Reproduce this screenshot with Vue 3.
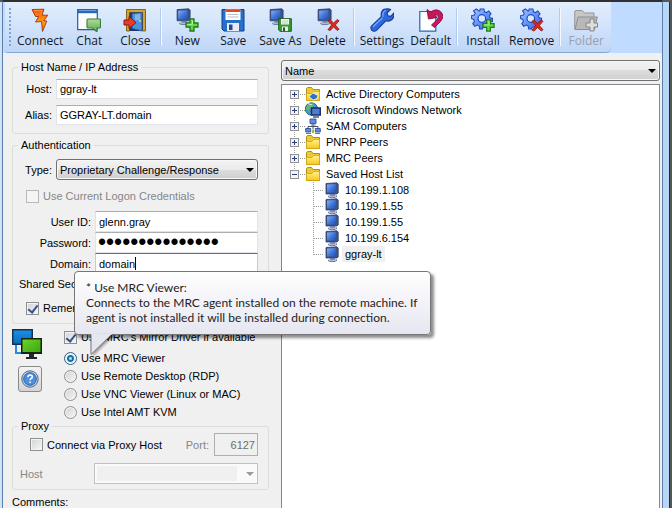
<script setup>
import { ref } from 'vue'

const tools = [
  { icon: 'bolt', label: 'Connect' },
  { icon: 'chat', label: 'Chat' },
  { icon: 'door', label: 'Close' },
  { sep: true },
  { icon: 'pc-add', label: 'New' },
  { icon: 'floppy', label: 'Save' },
  { icon: 'pc-save', label: 'Save As' },
  { icon: 'pc-del', label: 'Delete' },
  { sep: true },
  { icon: 'wrench', label: 'Settings' },
  { icon: 'revert', label: 'Default' },
  { sep: true },
  { icon: 'gear-add', label: 'Install' },
  { icon: 'gear-del', label: 'Remove' },
  { sep: true },
  { icon: 'folder-add', label: 'Folder', disabled: true },
]

const tree = [
  { icon: 'folder-ad', label: 'Active Directory Computers' },
  { icon: 'globe', label: 'Microsoft Windows Network' },
  { icon: 'network', label: 'SAM Computers' },
  { icon: 'folder', label: 'PNRP Peers' },
  { icon: 'folder', label: 'MRC Peers' },
  { icon: 'folder', label: 'Saved Host List', open: true },
]
const hosts = ['10.199.1.108', '10.199.1.55', '10.199.1.55', '10.199.6.154', 'ggray-lt']

const viewers = [
  { id: 'mrc', label: 'Use MRC Viewer' },
  { id: 'rdp', label: 'Use Remote Desktop (RDP)' },
  { id: 'vnc', label: 'Use VNC Viewer (Linux or MAC)' },
  { id: 'kvm', label: 'Use Intel AMT KVM' },
]

const host = ref('ggray-lt')
const alias = ref('GGRAY-LT.domain')
const user = ref('glenn.gray')
const password = ref('secretpassword1')
const domain = ref('domain')
const remember = ref(true)
const mirror = ref(true)
const viewer = ref('mrc')
const viaProxy = ref(false)
const port = ref('6127')
</script>

<template>
  <div class="window">
    <svg class="defs" aria-hidden="true">
      <defs>
        <linearGradient id="g-bolt" x1="0" y1="0" x2="0" y2="1"><stop offset="0" stop-color="#ff5a0a" /><stop offset=".6" stop-color="#ff9c10" /><stop offset="1" stop-color="#d86808" /></linearGradient>
        <linearGradient id="g-screen" x1="0" y1="0" x2="1" y2="1"><stop offset="0" stop-color="#8fb4f4" /><stop offset=".5" stop-color="#4478dc" /><stop offset="1" stop-color="#2350b4" /></linearGradient>
        <linearGradient id="g-chat" x1="0" y1="0" x2="0" y2="1"><stop offset="0" stop-color="#b4dc98" /><stop offset="1" stop-color="#56a850" /></linearGradient>
        <linearGradient id="g-gear" x1="0" y1="0" x2="1" y2="1"><stop offset="0" stop-color="#a4c6ff" /><stop offset="1" stop-color="#2c62e4" /></linearGradient>
        <linearGradient id="g-folder" x1="0" y1="0" x2="0" y2="1"><stop offset="0" stop-color="#fff08c" /><stop offset="1" stop-color="#f8c81c" /></linearGradient>
        <linearGradient id="g-blue" x1="0" y1="0" x2="0" y2="1"><stop offset="0" stop-color="#1a8ee0" /><stop offset="1" stop-color="#0c6cc0" /></linearGradient>
        <linearGradient id="g-green" x1="0" y1="0" x2="1" y2="1"><stop offset="0" stop-color="#6cd428" /><stop offset="1" stop-color="#38a810" /></linearGradient>
      </defs>
      <symbol id="pc" viewBox="0 0 16 16">
        <path d="M2 1.500 13 .8 14.200 2v9L12.800 12H2z" fill="#3c5488" stroke="#2c4068" stroke-width=".8" />
        <path d="M3 2.600 11.600 2v8.400L3 10.600z" fill="url(#g-screen)" />
        <path d="M6 12h5v1.600h2V15l-2.500 1H6l-2-1v-1.200h2z" fill="#6e7ea6" />
        <path d="M5 14.300h7" stroke="#c4cce0" />
      </symbol>
      <symbol id="plus" viewBox="0 0 14 14">
        <path d="M5 1h4v4h4v4H9v4H5V9H1V5h4z" fill="#5fd842" stroke="#1d7a1c" stroke-width="1.300" />
        <path d="M6 2.300h1.500v4H2.300" fill="none" stroke="#b8f49c" />
      </symbol>
      <symbol id="cross" viewBox="0 0 14 14">
        <path d="M1 2.500 3.500 1 7 5l4-4 2 1.500L9 7l4 4.500L11 13 7 9l-3.500 4L1 12l4-5z" fill="#d92a1c" stroke="#8c1210" stroke-width=".8" />
      </symbol>
      <symbol id="gear" viewBox="0 0 22 22">
        <path d="M9 1h4l.5 3 2 .8L18 3l2.500 3-1.700 2.300.7 2 2.500.5v3.500l-3 .6-1 2L19.500 19 17 21l-2.700-1.500-2 .8-.8 1.700H8.500L8 19l-2-1-2.600 1.400L1.200 16.500 3 14l-.7-2L0 11.300V8l3-.6.800-2L2 3l3-2 2.300 1.800L8.600 3z" transform="translate(.6 0) scale(.95)" fill="url(#g-gear)" stroke="#1c48c0" stroke-width="1.100" />
        <circle cx="10.800" cy="10.500" r="3.800" fill="#d8e8ff" stroke="#1c48c0" stroke-width="1.200" />
      </symbol>
      <symbol id="bolt" viewBox="0 0 24 24">
        <path d="M4 1.500 16 1.200l-2 6h5.800l-4 5.500 3 .300L14.500 23.500l-1-10-6 .500 3.200-5.500H7.500z" fill="url(#g-bolt)" stroke="#a8340a" stroke-width=".9" stroke-linejoin="round" />
        <path d="M6 2.500h8L12.500 7.500" fill="none" stroke="#ff9a50" stroke-width=".8" />
      </symbol>
      <symbol id="chat" viewBox="0 0 24 24">
        <path d="M.7 1.700h19.600v20H.7z" fill="#fafcff" stroke="#2c5aa0" stroke-width="1.200" />
        <path d="M.7 1.200h19.600v4H.7z" fill="#2c66b8" />
        <path d="M2 2.500h17" stroke="#6c9cdc" />
        <path d="M11 11h11.500q1 0 1 1v7q0 1-1 1H20v4L15.500 20H11q-1 0-1-1v-7q0-1 1-1z" fill="url(#g-chat)" stroke="#35803a" stroke-width="1.100" />
      </symbol>
      <symbol id="door" viewBox="0 0 24 24">
        <path d="M3.500 23V1.500h19V23h-3V4.500h-13V23z" fill="#d4a432" stroke="#7c5a10" stroke-width=".9" />
        <path d="M6.500 4.500h13V23h-13z" fill="#1e3868" />
        <path d="M9 5.500l10-1V23L9 20.500z" fill="#4c92dc" stroke="#1c4a94" stroke-width=".7" />
        <path d="M12 6.500l5-.500v6l-5 .500z" fill="#7eb6ee" />
        <circle cx="17" cy="13" r="1.100" fill="#f2d860" />
        <path d="M1 12h5V8.500l7 6-7 6V17H1z" fill="#e83c24" stroke="#8e1410" stroke-width="1" />
      </symbol>
      <symbol id="pc-add" viewBox="0 0 24 24">
        <use href="#pc" width="17" height="17" /><use href="#plus" x="10" y="10" width="14" height="14" />
      </symbol>
      <symbol id="pc-save" viewBox="0 0 24 24">
        <use href="#pc" width="17" height="17" />
        <path d="M10.700 10.700h12.600v12.600H12l-1.300-1.300z" fill="#3c9a34" stroke="#1c5c1c" />
        <path d="M13 11h8v5.500h-8z" fill="#f4f8f4" /><path d="M14 13h6M14 15h6" stroke="#9cb89c" stroke-width=".7" />
        <path d="M14 18.500h6V23h-6z" fill="#e4ece4" /><path d="M15 19.500h2V23h-2z" fill="#1c5c1c" />
      </symbol>
      <symbol id="pc-del" viewBox="0 0 24 24">
        <use href="#pc" width="17" height="17" /><use href="#cross" x="11" y="10" width="13" height="14" />
      </symbol>
      <symbol id="floppy" viewBox="0 0 24 24">
        <path d="M1 1.500h22v21.500H3l-2-2z" fill="#2470cc" stroke="#123e88" />
        <path d="M4.500 1.500h15V12h-15z" fill="#fff" /><path d="M4.500 1.500h15V4h-15z" fill="#e84428" />
        <path d="M6.500 6.500h11M6.500 9h11" stroke="#b4bcc8" />
        <path d="M6 15h12v8H6z" fill="#e8ecf2" /><path d="M8 16.500h3.500V22H8z" fill="#1c4c98" />
      </symbol>
      <symbol id="wrench" viewBox="0 0 24 24">
        <path d="M14 1.300Q18 0 20.500 1.500L17 5l.8 2.700 2.900.6L23.800 5q.7 4-1.800 6.500-2.500 2.300-6.200 1.300L6.500 22.300Q4.500 24 2 22.600 0 20 1.500 18L11.300 8.700Q10.500 3.500 14 1.300z" fill="#2d68dc" stroke="#143c9c" stroke-width="1.100" />
        <path d="M13 8.800Q12 4.500 15.500 2.500M3 18.700l9.500-9" fill="none" stroke="#7aa8fa" stroke-width="1.300" />
      </symbol>
      <symbol id="revert" viewBox="0 0 24 24">
        <path d="M.8 3.500h16v19.700H.8z" fill="#fff" stroke="#2a62c0" stroke-width="1.200" />
        <path d="M8 1.500l1.500 9.500 8.500-1.500-2.700-2.200q2.200-1.500 3.500.2 1.200 2-.8 4.300L12.500 17l3 2.500 6-6q4-5 1-9Q18-.5 11.500 4z" fill="#c8185c" stroke="#8a0c3c" stroke-width=".9" />
      </symbol>
      <symbol id="gear-add" viewBox="0 0 24 24"><use href="#gear" width="22" height="22" /><use href="#plus" x="11" y="11" width="13" height="13" /></symbol>
      <symbol id="gear-del" viewBox="0 0 24 24"><use href="#gear" width="22" height="22" /><use href="#cross" x="11" y="11" width="13" height="13" /></symbol>
      <symbol id="folder-add" viewBox="0 0 24 24">
        <path d="M.7 21V4q0-1.500 1.500-1.500h6L10.500 5H20v4" fill="#c6c6c6" stroke="#969696" />
        <path d="M1 21.500 4 9h19.300L20.500 21.500z" fill="#b8b8b8" stroke="#8e8e8e" />
        <path d="M16 11h4v4h3.500v4H20v4h-4v-4h-4v-4h4z" fill="#ddd" stroke="#858585" />
      </symbol>
      <symbol id="folder" viewBox="0 0 16 16">
        <path d="M1.500 14.500v-12L2.500 1.500h4l1.500 2h6.500v11z" fill="#f0c830" stroke="#b48c14" />
        <path d="M1.500 14.500v-7h5.500l1.500-2h6v9z" fill="url(#g-folder)" stroke="#d0a418" stroke-width=".8" />
      </symbol>
      <symbol id="folder-ad" viewBox="0 0 16 16">
        <use href="#folder" width="16" height="16" />
        <path d="M4 10.500 8 7l5 2.500-1 3-4 1.500z" fill="#2d72c4" stroke="#fff" stroke-width=".7" />
      </symbol>
      <symbol id="globe" viewBox="0 0 16 16">
        <circle cx="6.500" cy="7" r="6.200" fill="#4a96c8" stroke="#2a6a78" />
        <path d="M2 3.500Q5 .5 9 1.500L8 4.500 5 6 3.500 9 1 7z" fill="#66b86c" /><path d="M3 1.500l4 1.500" stroke="#d8f0e4" />
        <path d="M6.500 6h8.800v7H6.500z" fill="#4a7cd8" stroke="#1c2e5c" stroke-width="1.400" />
        <path d="M8 15h6" stroke="#4c5c80" stroke-width="1.500" />
      </symbol>
      <symbol id="network" viewBox="0 0 16 16">
        <path d="M8 6v5M3 11V8.500h10V11" fill="none" stroke="#46546e" />
        <path d="M5 1h6v4.500H5z" fill="#5d8ce4" stroke="#34508c" stroke-width=".9" /><path d="M.7 10.500h5v3.500h-5zM10.300 10.500h5v3.500h-5z" fill="#5d8ce4" stroke="#34508c" stroke-width=".9" />
        <path d="M1 15.500h5M10 15.500h5M6 7h4.500" stroke="#6a7690" />
        <path d="M7 11.500h2V15H7z" fill="#9cba4c" />
      </symbol>
    </svg>

    <nav class="toolbar" aria-label="Main">
      <div class="strip">
        <span class="grip"></span>
        <template v-for="(t, i) in tools" :key="i">
          <span v-if="t.sep" class="sep"></span>
          <button v-else type="button" class="tool" :disabled="t.disabled">
            <svg class="tool-icon"><use :href="'#' + t.icon" /></svg>
            <span>{{ t.label }}</span>
          </button>
        </template>
      </div>
    </nav>

    <main class="body">
      <form class="form" @submit.prevent>
        <fieldset class="group names">
          <legend>Host Name / IP Address</legend>
          <label for="host">Host:</label>
          <input id="host" v-model="host" class="text" type="text" />
          <label for="alias">Alias:</label>
          <input id="alias" v-model="alias" class="text" type="text" />
        </fieldset>

        <fieldset class="group auth">
          <legend>Authentication</legend>
          <div class="type-row">
            <label for="type">Type:</label>
            <div class="combo">
              <select id="type"><option>Proprietary Challenge/Response</option></select>
            </div>
          </div>
          <label class="check indent current off"><input type="checkbox" disabled /> Use Current Logon Credentials</label>
          <div class="creds">
            <label for="user">User ID:</label>
            <input id="user" v-model="user" class="text" type="text" />
            <label for="pass">Password:</label>
            <input id="pass" v-model="password" class="text secret" type="password" />
            <label for="domain">Domain:</label>
            <div class="text focused">
              <input id="domain" v-model="domain" class="bare" type="text" /><span class="caret"></span>
            </div>
          </div>
          <div class="secret-label">Shared Secret:</div>
          <label class="check indent remember"><input v-model="remember" type="checkbox" /> Remember</label>
        </fieldset>

        <div class="options">
          <div class="side">
            <svg class="screens" viewBox="0 0 30 30">
              <path d="M4 16v8h8" fill="none" stroke="#2a8cdc" stroke-width="2" />
              <path d="M0 0h21v16H0z" fill="#16324c" /><path d="M1.500 1.500h18v13h-18z" fill="url(#g-blue)" />
              <path d="M9 9h21v16H9z" fill="#16240e" /><path d="M10.500 10.500h18v12.500h-18z" fill="url(#g-green)" />
              <path d="M17 25h5v3h3v2H14v-2h3z" fill="#20262c" />
            </svg>
            <button type="button" class="help" aria-label="Help">
              <svg viewBox="0 0 18 18">
                <circle cx="9" cy="9" r="8.200" fill="#c8d4e4" stroke="#58687e" /><circle cx="9" cy="9" r="6.300" fill="#4c8ee0" stroke="#2a62b4" />
                <path d="M6.800 7.300Q7 5 9.100 5q2.200 0 2.200 1.900 0 1.100-1.300 1.800-.9.500-.9 1.500M9.100 11.500v1.500" fill="none" stroke="#fff" stroke-width="1.500" />
              </svg>
            </button>
          </div>
          <div class="choices">
            <label class="check mirror"><input v-model="mirror" type="checkbox" /> Use MRC's Mirror Driver if available</label>
            <label v-for="v in viewers" :key="v.id" class="check choice">
              <input v-model="viewer" type="radio" name="viewer" :value="v.id" /> {{ v.label }}
            </label>
          </div>
        </div>

        <fieldset class="group proxy">
          <legend>Proxy</legend>
          <div class="proxy-row">
            <label class="check"><input v-model="viaProxy" type="checkbox" /> Connect via Proxy Host</label>
            <label class="off port-label" for="port">Port:</label>
            <input id="port" v-model="port" class="port" type="text" disabled />
          </div>
          <div class="proxy-row host-row">
            <label class="off" for="proxy-host">Host</label>
            <div class="combo disabled"><select id="proxy-host" disabled></select></div>
          </div>
        </fieldset>
        <div class="comments">Comments:</div>
      </form>

      <section class="browser">
        <div class="combo wide">
          <select aria-label="Sort by"><option>Name</option></select>
        </div>
        <div class="list">
          <ul class="tree">
            <li v-for="n in tree" :key="n.label">
              <div class="node">
                <span class="toggle" :class="{ open: n.open }"></span>
                <svg class="node-icon"><use :href="'#' + n.icon" /></svg>
                <span class="name">{{ n.label }}</span>
              </div>
              <ul v-if="n.open" class="children">
                <li v-for="(h, i) in hosts" :key="i" class="leaf">
                  <svg class="node-icon"><use href="#pc" /></svg>
                  <span class="name" :class="{ selected: h === 'ggray-lt' }">{{ h }}</span>
                </li>
              </ul>
            </li>
          </ul>
        </div>
      </section>
    </main>

    <div class="tooltip" role="tooltip">
      <p>* Use MRC Viewer:</p>
      <p>Connects to the MRC agent installed on the remote machine. If</p>
      <p>agent is not installed it will be installed during connection.</p>
      <svg class="tail" viewBox="0 0 24 22"><path d="M1 0v20.500L22 0" fill="#e6e6f1" stroke="#767676" /><path d="M1.500 0h20" stroke="#e6e6f1" stroke-width="2" /></svg>
    </div>
  </div>
</template>

<style>
body { margin: 0; overflow: hidden; background: #2f2f2f; }
</style>

<style scoped>
* { box-sizing: border-box; }
.window {
  position: relative;
  display: flex;
  flex-direction: column;
  height: 100vh;
  overflow: hidden;
  padding: 0 3px 0 0;
  background: #565656;
  color: #000;
  font: 11px/14px "Liberation Sans", Arial, sans-serif;
}
.defs { position: absolute; width: 0; height: 0; }
.toolbar {
  flex: none;
  height: 55px;
  padding-bottom: 2px;
  border: solid #5c7ea8;
  border-width: 0 1px 0 1px;
  border-top: 2px solid #303030;
  margin: 0 6px 0 2px;
  background: linear-gradient(#bfdbff 0 51px, #e9f1fb 51px);
}
.window::before {
  content: "";
  position: absolute;
  inset: 2px 3px 0 0;
  background: linear-gradient(90deg, #cfe3f7, #b7d7f7);
  box-shadow: 1px 0 #222c38;
}
.toolbar, .body { position: relative; }
.strip {
  display: flex;
  align-items: center;
  gap: 2px;
  width: fit-content;
  height: 51px;
  margin-left: 2px;
  padding: 0 3px 0 4px;
  border-bottom: 1px solid #86a5d4;
  border-radius: 0 0 5px 3px;
  background: linear-gradient(#e2edfc, #d3e4fb 45%, #bed6f6);
}
.grip {
  width: 2px;
  height: 38px;
  margin-right: 2px;
  background: repeating-linear-gradient(#83a3cf 0 2px, transparent 2px 4px);
}
.sep { width: 2px; height: 38px; margin: 0 1px; background: linear-gradient(90deg, #b2cbee 50%, #f4f9ff 50%); }
.tool {
  display: flex;
  flex-direction: column;
  align-items: center;
  gap: 1px;
  min-width: 44px;
  padding: 3px 2px 0;
  border: 0;
  background: none;
  color: #101828;
  font: 12px/16px "Open Sans", "Segoe UI", sans-serif;
  white-space: nowrap;
}
.tool:disabled { color: #98a0ac; }
.tool-icon { width: 24px; height: 24px; }

.body {
  flex: 1;
  display: flex;
  gap: 12px;
  min-height: 0;
  margin: 0 6px 0 2px;
  padding: 5px 2px 0 9px;
  border: solid #5c7ea8;
  border-width: 0 1px;
  background: #f0f0f0;
}
.form { flex: none; width: 257px; }
.group { min-width: 0; margin: 0; padding: 0 10px; border: 1px solid #dcdcdc; border-radius: 3px; }
legend { margin-left: -5px; padding: 0 3px; line-height: 14px; }
label { white-space: nowrap; }
.names {
  display: grid;
  grid-template-columns: 29px 1fr;
  gap: 6px 4px;
  align-items: center;
  height: 74px;
  padding-top: 5px;
  align-content: start;
}
.names label, .creds label, .type-row label { text-align: right; }
input, select, button { margin: 0; font: inherit; color: inherit; }
.text {
  width: 100%;
  min-width: 0;
  height: 20px;
  padding: 0 3px;
  border: 1px solid #e2e3ea;
  border-top-color: #abadb3;
  border-radius: 0;
  background: #fff;
  outline: 0;
}
.auth { height: 186px; margin-top: 4px; }
.type-row { display: grid; grid-template-columns: 29px 1fr; gap: 4px; align-items: center; padding-top: 7px; }
.combo { position: relative; min-width: 0; }
.combo select {
  display: block;
  width: 100%;
  height: 21px;
  padding: 0 18px 0 3px;
  appearance: none;
  border: 1px solid #707070;
  border-radius: 3px;
  background: linear-gradient(#f2f2f2, #ebebeb 50%, #dddddd 50%, #cfcfcf);
  box-shadow: inset 0 0 0 1px #f8f8f8;
}
.combo::after {
  content: "";
  position: absolute;
  right: 4px;
  top: 9px;
  border: 4px solid transparent;
  border-top-color: #000;
  border-bottom: 0;
}
.check { display: flex; align-items: center; gap: 4px; height: 18px; }
.indent { margin-left: 3px; }
.off { color: #868686; }
.current { margin-top: 7px; }
.check input {
  flex: none;
  width: 13px;
  height: 13px;
  appearance: none;
  border: 1px solid #8e8f8f;
  background: linear-gradient(135deg, #cfd3d8, #f6f6f6);
  box-shadow: inset 0 0 0 1px #f4f4f4;
}
.check input:disabled { border-color: #b8b8b8; background: #f4f4f4; }
.check input[type="checkbox"]:checked { position: relative; }
.check input[type="checkbox"]:checked::after {
  content: "";
  position: absolute;
  left: 3px;
  top: 0;
  width: 4px;
  height: 8px;
  border: solid #3a4f8c;
  border-width: 0 2px 2px 0;
  transform: rotate(38deg);
}
.check input[type="radio"] { border-radius: 50%; }
.check input[type="radio"]:checked {
  border-color: #2f5f86;
  background: radial-gradient(circle, #8fe0fa 0 1px, #1a6f9e 2px 3px, #e4f2fa 4px);
}
.creds { display: grid; grid-template-columns: 68px 1fr; column-gap: 4px; align-items: center; margin-top: 6px; }
.creds .text { height: 21px; }
.creds .secret { padding: 0 2px; font: 23px/18px "Liberation Sans", sans-serif; }
.focused { display: flex; align-items: center; border-color: #b5cfe7; border-top-color: #3d7bad; }
.bare { field-sizing: content; padding: 0; border: 0; outline: 0; background: none; }
.caret { width: 1px; height: 13px; background: #000; }
.secret-label { margin: 3px 0 0 -4px; }
.remember { margin-top: 8px; }

.options { display: flex; gap: 22px; height: 95px; padding-top: 5px; }
.side { display: flex; flex-direction: column; align-items: center; gap: 7px; }
.screens { width: 30px; height: 30px; }
.help {
  display: grid;
  place-items: center;
  width: 24px;
  height: 26px;
  padding: 0;
  margin-left: 6px;
  border: 1px solid #8a8a8a;
  border-radius: 3px;
  background: linear-gradient(#f3f3f3, #d4d4d4);
}
.help svg { width: 18px; height: 18px; }
.mirror { height: 16px; margin-bottom: 4px; }

.proxy { height: 71px; }
.proxy-row { display: flex; align-items: center; padding-left: 7px; }
.port-label { margin-left: auto; }
.port { width: 44px; height: 23px; margin-left: 5px; padding: 0 2px; border: 1px solid #afafaf; background: #f0f0f0; color: #6d6d6d; text-align: right; }
.host-row { justify-content: space-between; margin-top: 7px; padding-left: 0; }
.host-row label { margin-left: -3px; }
.combo.disabled { width: 164px; }
.combo.disabled select { border-color: #afafaf; border-radius: 0; background: linear-gradient(90deg, #f0f0f0 142px, #fff 142px); box-shadow: inset 0 0 0 2px #fff; }
.combo.disabled::after { border-top-color: #9a9a9a; }
.comments { margin-top: 5px; }

.browser { flex: 1; display: flex; flex-direction: column; gap: 3px; min-width: 0; }
.list { flex: 1; border: 1px solid #828790; border-bottom: 0; background: #fff; padding-top: 1px; }
ul { margin: 0; padding: 0; list-style: none; }
.node, .leaf { display: flex; align-items: center; height: 16px; }
.tree { padding-left: 8px; background: repeating-linear-gradient(#999 0 1px, transparent 1px 2px) 12px 8px / 1px 80px no-repeat; }
.toggle {
  position: relative;
  width: 9px;
  height: 9px;
  margin-right: 6px;
  border: 1px solid #919191;
  background: linear-gradient(#2b3c7c, #2b3c7c) center / 5px 1px no-repeat, linear-gradient(#2b3c7c, #2b3c7c) center / 1px 5px no-repeat, #f4f4f4;
}
.toggle.open { background: linear-gradient(#2b3c7c, #2b3c7c) center / 5px 1px no-repeat, #f4f4f4; }
.toggle::after { content: ""; position: absolute; left: 9px; top: 3px; width: 5px; border-top: 1px dotted #999; }
.node-icon { flex: none; width: 16px; height: 16px; }
.name { margin-left: 2px; padding: 0 3px; }
.children { margin-left: 23px; background: repeating-linear-gradient(#999 0 1px, transparent 1px 2px) 0 0 / 1px 73px no-repeat; }
.leaf::before { content: ""; width: 10px; border-top: 1px dotted #999; margin-right: 1px; }
.selected { background: #f0f0f0; line-height: 16px; }

.tooltip {
  position: absolute;
  left: 74px;
  top: 271px;
  padding: 8px 13px 9px 11px;
  border: 1px solid #767676;
  border-radius: 4px;
  background: linear-gradient(#fff, #e6e6f1);
  box-shadow: 3px 3px 3px rgba(0, 0, 0, .45);
  color: #222;
  font: 12px/15px Lato, "Segoe UI", sans-serif;
  white-space: nowrap;
}
.tooltip p { margin: 0; }
.tail { position: absolute; left: 15px; top: 62px; width: 24px; height: 22px; filter: drop-shadow(2px 1px 1px rgba(0, 0, 0, .35)); }
</style>
